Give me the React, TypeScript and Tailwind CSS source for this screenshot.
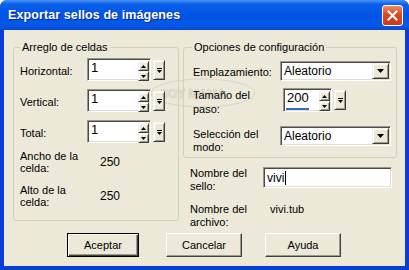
import React from 'react';

const sunken =
    'border border-t-[#9A988C] border-l-[#9A988C] border-b-white border-r-white shadow-[inset_1px_1px_0_#4A4A4A,inset_-1px_-1px_0_#E2DFD2] bg-white';
const raised =
    'border border-t-[#F4F2EA] border-l-[#F4F2EA] border-b-[#3C3C3C] border-r-[#3C3C3C] shadow-[inset_1px_1px_0_#fff,inset_-1px_-1px_0_#9D9A8C] bg-[#ECE9D8]';

const Tri: React.FC<{ up?: boolean; w?: number; h?: number }> = ({ up, w = 5, h = 3 }) => (
    <svg width={w} height={h} viewBox={`0 0 ${w} ${h}`}>
        {up ? (
            <polygon points={`0,${h} ${w},${h} ${w / 2},0`} fill="#000" />
        ) : (
            <polygon points={`0,0 ${w},0 ${w / 2},${h}`} fill="#000" />
        )}
    </svg>
);

const SpinField: React.FC<{ value: string; className: string; bar?: boolean }> = ({ value, className, bar }) => (
    <div className="flex items-start gap-[2px]">
        <div className={`${sunken} ${className} relative flex items-start justify-between pl-[3px] pr-[1px] pt-[1px]`}>
            <span className="text-[13px] leading-[16px] text-black">{value}</span>
            <div className="flex flex-col pt-[1px]">
                <div className={`${raised} w-[11px] h-[10px] flex items-center justify-center`}>
                    <Tri up />
                </div>
                <div className={`${raised} w-[11px] h-[10px] flex items-center justify-center`}>
                    <Tri />
                </div>
            </div>
            {bar && <div className="absolute left-[2px] bottom-[1px] w-[23px] h-[2px] bg-[#3A6CC4]" />}
        </div>
        <div className={`${raised} w-[12px] h-[20px] mt-[2px] flex flex-col items-center justify-center gap-[1px]`}>
            <div className="w-[5px] h-[1px] bg-black" />
            <Tri />
        </div>
    </div>
);

const Combo: React.FC<{ value: string }> = ({ value }) => (
    <div className={`${sunken} w-[111px] h-[20px] flex items-center justify-between pl-[3px] pr-[1px]`}>
        <span className="text-[12px] leading-[14px]">{value}</span>
        <div className={`${raised} w-[17px] h-[16px] flex items-center justify-center`}>
            <Tri w={7} h={4} />
        </div>
    </div>
);

const Button: React.FC<{ label: string; className: string; primary?: boolean }> = ({ label, className, primary }) => (
    <div
        className={`${className} h-[24px] flex items-center justify-center text-[11px] bg-[#ECE9D8] ${
            primary
                ? 'border border-black shadow-[inset_1px_1px_0_#fff,inset_-1px_-1px_0_#404040,inset_-2px_-2px_0_#9D9A8C]'
                : 'border border-t-white border-l-white border-b-[#404040] border-r-[#404040] shadow-[inset_-1px_-1px_0_#9D9A8C]'
        }`}
    >
        {label}
    </div>
);

export default function App() {
    return (
        <div className="w-[409px] h-[270px] flex flex-col bg-[#0A3DD6] rounded-t-[7px] overflow-hidden font-['Liberation_Sans',Arial,sans-serif] text-black select-none">
            {/* title bar */}
            <div className="h-[30px] flex items-center justify-between pl-[8px] pr-[6px] bg-[linear-gradient(to_bottom,#4A93F7_0%,#0B60EA_14%,#0054E3_50%,#0559EA_86%,#0A46CE_100%)]">
                <span className="text-[12.5px] font-bold text-white [text-shadow:1px_1px_0_#0A2A8C] tracking-[0.1px]">
                    Exportar sellos de imágenes
                </span>
                <div className="w-[21px] h-[21px] rounded-[3px] border border-white bg-[linear-gradient(to_bottom,#EC8A6A,#DB4A22_45%,#C8391A)] flex items-center justify-center">
                    <svg width="11" height="11" viewBox="0 0 11 11">
                        <path d="M1.5 1.5 L9.5 9.5 M9.5 1.5 L1.5 9.5" stroke="#fff" strokeWidth="2" strokeLinecap="square" />
                    </svg>
                </div>
            </div>

            {/* body */}
            <div className="flex-1 mx-[4px] mb-[4px] bg-[#ECE9D8] flex flex-col pt-[10px] relative">
                {/* watermark */}
                <svg className="absolute left-[144px] top-[46px]" width="110" height="34" viewBox="0 0 110 34">
                    <ellipse cx="55" cy="17" rx="52" ry="14" fill="none" stroke="#DAD6C6" strokeWidth="1" />
                    <text x="12" y="22" fontSize="12" fontWeight="bold" fill="none" stroke="#D2CEBE" strokeWidth="0.7" fontFamily="Liberation Sans">
                        SOY MAMA
                    </text>
                </svg>

                <div className="h-[193px] flex items-start pl-[9px] gap-[4px] relative">
                    {/* left group */}
                    <fieldset className="w-[166px] h-[181px] border border-[#D0D0BF] rounded-[3px] px-[6px]">
                        <legend className="px-[2px] text-[11px] leading-[14px]">Arreglo de celdas</legend>
                        <div className="flex flex-col">
                            <div className="flex items-center mt-[4px]">
                                <span className="w-[67px] text-[11px] pt-[3px]">Horizontal:</span>
                                <SpinField value="1" className="w-[64px] h-[23px]" />
                            </div>
                            <div className="flex items-center mt-[8px]">
                                <span className="w-[67px] text-[11px] pt-[3px]">Vertical:</span>
                                <SpinField value="1" className="w-[64px] h-[23px]" />
                            </div>
                            <div className="flex items-center mt-[8px]">
                                <span className="w-[67px] text-[11px] pt-[3px]">Total:</span>
                                <SpinField value="1" className="w-[64px] h-[23px]" />
                            </div>
                            <div className="flex items-center mt-[7px] text-[11px] leading-[12px]">
                                <span className="w-[80px]">
                                    Ancho de la
                                    <br />
                                    celda:
                                </span>
                                <span className="text-[12px]">250</span>
                            </div>
                            <div className="flex items-center mt-[10px] text-[11px] leading-[12px]">
                                <span className="w-[80px]">
                                    Alto de la
                                    <br />
                                    celda:
                                </span>
                                <span className="text-[12px]">250</span>
                            </div>
                        </div>
                    </fieldset>

                    {/* right column */}
                    <div className="w-[214px] flex flex-col">
                        <fieldset className="h-[118px] border border-[#D0D0BF] rounded-[3px] pl-[8px]">
                            <legend className="px-[2px] text-[11px] leading-[14px]">Opciones de configuración</legend>
                            <div className="flex flex-col">
                                <div className="flex items-center mt-[7px]">
                                    <span className="w-[88px] pl-[1px] text-[11px] pt-[3px]">Emplazamiento:</span>
                                    <Combo value="Aleatorio" />
                                </div>
                                <div className="flex items-start mt-[7px]">
                                    <span className="w-[91px] pl-[1px] text-[11px] leading-[14px]">
                                        Tamaño del
                                        <br />
                                        paso:
                                    </span>
                                    <SpinField value="200" className="w-[49px] h-[24px]" bar />
                                </div>
                                <div className="flex items-start mt-[10px]">
                                    <span className="w-[88px] pl-[1px] text-[11px] leading-[13px] pt-[2px]">
                                        Selección del
                                        <br />
                                        modo:
                                    </span>
                                    <Combo value="Aleatorio" />
                                </div>
                            </div>
                        </fieldset>

                        <div className="flex items-start mt-[9px] pl-[7px]">
                            <span className="w-[73px] text-[11px] leading-[13px]">
                                Nombre del
                                <br />
                                sello:
                            </span>
                            <div className={`${sunken} w-[129px] h-[21px] flex items-center pl-[3px]`}>
                                <span className="text-[12px] leading-[14px]">vivi</span>
                                <span className="w-[1px] h-[14px] bg-black ml-[1px]" />
                            </div>
                        </div>

                        <div className="flex items-start mt-[10px] pl-[7px] text-[11px] leading-[13px]">
                            <span className="w-[80px]">
                                Nombre del
                                <br />
                                archivo:
                            </span>
                            <span>vivi.tub</span>
                        </div>
                    </div>
                </div>

                {/* buttons */}
                <div className="flex items-center">
                    <Button label="Aceptar" className="w-[72px] ml-[63px]" primary />
                    <Button label="Cancelar" className="w-[76px] ml-[27px]" />
                    <Button label="Ayuda" className="w-[76px] ml-[23px]" />
                </div>
            </div>
        </div>
    );
}
